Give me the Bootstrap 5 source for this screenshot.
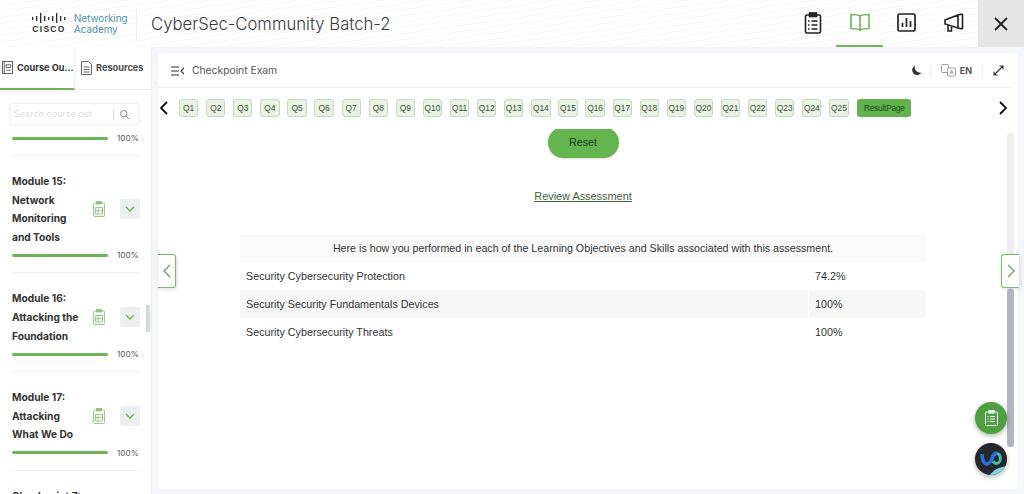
<!DOCTYPE html>
<html lang="en">
<head>
  <meta charset="UTF-8" />
  <meta name="viewport" content="width=device-width, initial-scale=1.0"/>
  <title>CyberSec-Community Batch-2</title>
  <link href="https://cdn.jsdelivr.net/npm/bootstrap@5.3.0/dist/css/bootstrap.min.css" rel="stylesheet"/>
  <style>
    html, body { height: 494px; overflow: hidden; }
    body { background: #f5f6fa; font-family: Inter, "Liberation Sans", sans-serif; color: #2b2b2b; position: relative; }
    .top-bar { height: 47px; background: repeating-linear-gradient(172deg, #fff 0 5px, #f8f8f8 5px 6px); }
    .brand-box { width: 137px; padding-left: 32px; border-right: 1px solid #f0f0f0; height: 32px; }
    .cisco-word { font: 700 8.5px/9px "Liberation Sans", sans-serif; letter-spacing: 1.3px; color: #2c2c2c; margin-top: 2px; text-align: center; }
    .academy-word { font: 400 9.8px/11px Inter, sans-serif; color: #4f8fb0; margin-left: 8px; }
    .course-title { font: 300 16.7px/24px Inter, sans-serif; color: #3a3a3a; margin-left: 14px; }
    .top-icons { margin-right: 1px; }
    .top-icon { width: 47px; height: 47px; border-bottom: 2px solid transparent; }
    .top-icon.on { border-bottom-color: #6cb75a; }
    .close-box { width: 46px; height: 47px; background: #e6e6e6; }
    .side-panel { width: 152px; height: 447px; background: #fff; border-right: 1px solid #eceef2; position: relative; }
    .side-tab { height: 43px; font-size: 9.2px; font-weight: 700; color: #4a4a4a; white-space: nowrap; border-bottom: 1px solid #eee; }
    .side-tab.on { width: 75px; padding-left: 2px; border-bottom: 2px solid #6cb75a; border-right: 1px solid #f0f0f0; color: #333; }
    .side-tab.off { width: 76px; padding-left: 6px; }
    .search-wrap { margin: 13px 11px 3px 9px; height: 22px; border: 1px solid #eee; border-radius: 3px; font-size: 9px; color: #dedede; padding-left: 4px; }
    .search-cut { border-left: 1px solid #ddd; height: 11px; margin-left: auto; padding-left: 6px; margin-right: 10px; }
    .module-list { height: 366px; overflow: hidden; padding: 0 11px 0 12px; }
    .module-item { border-bottom: 1px solid #f0f0f0; padding: 16px 0 11px; }
    .module-item.first { padding: 1px 0 11px; }
    .module-name { font-size: 10.2px; font-weight: 700; line-height: 18.6px; color: #333; width: 81px; }
    .side-chevron { width: 20px; height: 20px; background: #eceef0; border-radius: 2px; margin-left: 15px; }
    .bar-row { margin-top: 3px; }
    .bar-track { width: 96px; height: 3px; background: #6db35a; border-radius: 2px; }
    .bar-label { font-size: 8.2px; color: #555; margin-left: 9px; line-height: 12px; }
    .side-scroll { position: absolute; right: 1px; top: 258px; width: 4px; height: 27px; background: #d6d8dc; }
    .main-card { width: 860px; height: 436px; margin: 6px 0 0 6px; background: #fff; border-radius: 4px; position: relative; box-shadow: 0 0 2px rgba(0,0,0,.06); }
    .exam-head { height: 35px; padding: 1px 9px 0 13px; border-bottom: 1px solid #f0f0f0; margin-right: 5px; font-size: 10.3px; color: #555; }
    .lang-label { font-size: 9px; font-weight: 700; color: #555; }
    .head-sep { border-left: 1px solid #eee; height: 12px; margin: 0 10px; }
    .head-sep.tight { margin-left: 8px; }
    .q-row { height: 41px; padding: 11px 0 0 2px; }
    .q-pill { width: 19.3px; height: 18px; margin-right: 7.8px; background: #e9f3e4; border: 1px solid #c6d8bf; border-radius: 3px; font: 8.4px/16px "Liberation Sans", sans-serif; color: #3d4a3a; text-align: center; flex: none; }
    .q-result { width: 54px; height: 18px; margin-left: 1px; background: #62b14c; border-radius: 3px; font: 8.3px/18px "Liberation Sans", sans-serif; color: #1c4f16; text-align: center; letter-spacing: -.2px; flex: none; }
    .q-arrow-left { margin: 2px 11px 0 0; flex: none; }
    .q-arrow-right { margin: 2px 0 0 88px; flex: none; }
    .content-area { height: 359px; overflow: hidden; font-family: "Liberation Sans", sans-serif; text-align: center; padding-right: 10px; }
    .reset-pill { width: 71px; height: 31px; margin-top: -2px; background: #64b450; border-radius: 16px; font-size: 10.7px; line-height: 31px; color: #1e3a18; box-shadow: 0 1px 2px rgba(0,0,0,.15); }
    .review-link { margin-top: 31px; font-size: 10.9px; line-height: 14px; color: #3e5f3c; text-decoration: underline; }
    .score-table { width: 686px; margin: 32px 0 0 82px; font-size: 10.75px; color: #333; text-align: left; }
    .score-head { height: 27px; line-height: 27px; background: #fafafa; text-align: center; font-size: 10.7px; }
    .score-row { height: 28px; line-height: 28px; padding-left: 6px; }
    .score-row.alt { background: #f6f6f6; }
    .score-value { margin-left: auto; width: 118px; padding-left: 6px; border-left: 1px solid #fff; }
    .edge-tab { position: absolute; top: 201px; width: 18px; height: 34px; background: #fff; border: 1px solid #7fbb6b; box-shadow: 1px 1px 4px rgba(0,0,0,.15); }
    .edge-left { left: 0; border-left: 0; border-radius: 0 3px 3px 0; }
    .edge-right { right: -1px; border-right: 0; border-radius: 3px 0 0 3px; }
    .page-scroll { position: absolute; right: 4px; top: 80px; width: 7px; height: 314px; background: #eeeef0; border-radius: 4px; }
    .page-thumb { position: absolute; left: 0; bottom: 0; width: 100%; height: 158px; background: #b4b4bc; border-radius: 4px; }
    .float-btn { position: absolute; left: 817px; width: 32px; height: 32px; border-radius: 50%; box-shadow: 0 2px 5px rgba(0,0,0,.3); }
    .float-green { top: 349px; background: #4d9f3f; }
    .float-webex { top: 390px; background: #24272b; overflow: hidden; }
    .tr-glyph { font: 700 5.5px "Liberation Sans", sans-serif; fill: #888; stroke: none; }
  </style>
</head>
<body>
  <!-- Top bar -->
  <div class="top-bar d-flex align-items-center">
    <div class="brand-box d-flex align-items-center">
      <div>
        <svg class="d-block" width="34" height="10" viewBox="0 0 34 10" fill="#2c2c2c">
          <rect x="0" y="4" width="1.3" height="3"/><rect x="4" y="3" width="1.3" height="5"/><rect x="8" y="0" width="1.3" height="10"/>
          <rect x="12" y="3" width="1.3" height="5"/><rect x="16" y="4" width="1.3" height="3"/><rect x="20" y="3" width="1.3" height="5"/>
          <rect x="24" y="0" width="1.3" height="10"/><rect x="28" y="3" width="1.3" height="5"/><rect x="32" y="4" width="1.3" height="3"/>
        </svg>
        <div class="cisco-word">CISCO</div>
      </div>
      <div class="academy-word">Networking<br/>Academy</div>
    </div>
    <div class="course-title">CyberSec-Community Batch-2</div>
    <div class="ms-auto d-flex">
      <div class="top-icons d-flex">
        <div class="top-icon d-flex align-items-center justify-content-center">
          <svg width="18" height="22" viewBox="0 0 18 22" fill="none" stroke="#222" stroke-width="1.6"><rect x="1.500" y="3" width="15" height="18" rx="1.500"/><rect x="5.500" y="1" width="7" height="3.500" fill="#222"/><path d="M7.500 9h6M7.500 13h6M7.500 17h6M4 9h1.500M4 13h1.500M4 17h1.500"/></svg>
        </div>
        <div class="top-icon on d-flex align-items-center justify-content-center">
          <svg width="20" height="19" viewBox="0 0 20 19" fill="none" stroke="#6cb75a" stroke-width="1.600"><path d="M10 3C8 1.800 5 1.500 1 1.500v14c4 0 7 .3 9 1.500 2-1.200 5-1.500 9-1.500v-14c-4 0-7 .3-9 1.500zM10 3v15"/></svg>
        </div>
        <div class="top-icon d-flex align-items-center justify-content-center">
          <svg width="19" height="19" viewBox="0 0 19 19" fill="none" stroke="#222" stroke-width="1.700"><rect x="1" y="1" width="17" height="17" rx="1.500"/><path d="M5.500 14V10M9.500 14V5M13.500 14V8"/></svg>
        </div>
        <div class="top-icon d-flex align-items-center justify-content-center">
          <svg width="20" height="20" viewBox="0 0 20 20" fill="none" stroke="#222" stroke-width="1.600"><path d="M1 7l13-5v13L1 11zM18.500 1v15M14 2l4.500-1M14 15l4.500 1M4 12v6h3.500v-5"/></svg>
        </div>
      </div>
      <div class="close-box d-flex align-items-center justify-content-center">
        <svg width="14" height="14" viewBox="0 0 14 14" stroke="#222" stroke-width="1.800"><path d="M1 1l12 12M13 1L1 13"/></svg>
      </div>
    </div>
  </div>

  <div class="d-flex">
    <!-- Sidebar -->
    <div class="side-panel flex-shrink-0">
      <div class="d-flex">
        <div class="side-tab on d-flex align-items-center gap-1">
          <svg class="flex-shrink-0" width="11" height="13" viewBox="0 0 12 14" fill="none" stroke="#555"><rect x=".5" y=".5" width="11" height="13"/><path d="M2.500.5v13M4.500 4h5v3h-5zM4.500 10h5"/></svg>
          Course Ou...
        </div>
        <div class="side-tab off d-flex align-items-center gap-1">
          <svg class="flex-shrink-0" width="11" height="14" viewBox="0 0 11 14" fill="none" stroke="#666"><path d="M.5.500h7l3 3v10H.5zM2.500 6h6M2.500 8.500h6M2.500 11h6"/></svg>
          Resources
        </div>
      </div>
      <div class="search-wrap d-flex align-items-center">
        Search course out
        <div class="search-cut d-flex align-items-center">
          <svg width="9" height="9" viewBox="0 0 9 9" fill="none" stroke="#888"><circle cx="3.700" cy="3.700" r="3.200"/><path d="M6 6l3 3"/></svg>
        </div>
      </div>
      <div class="module-list" id="moduleList"></div>
      <div class="side-scroll"></div>
    </div>

    <!-- Main card -->
    <div class="main-card">
      <div class="exam-head d-flex align-items-center">
        <svg class="me-2" width="13" height="10" viewBox="0 0 13 10" fill="none" stroke="#333" stroke-width="1.200"><path d="M0 1h8M0 5h8M0 9h8M13 2L10 5l3 3"/></svg>
        Checkpoint Exam
        <svg class="ms-auto" width="11" height="11" viewBox="0 0 11 11" fill="#333"><path d="M4 .5a5 5 0 1 0 6.500 7A5.500 5.500 0 0 1 4 .5z"/></svg>
        <div class="head-sep tight"></div>
        <svg width="15" height="13" viewBox="0 0 15 13" fill="none" stroke="#888" stroke-width=".8"><rect x=".5" y=".5" width="7" height="8" rx="1"/><rect x="6.500" y="4" width="8" height="8" rx="1" fill="#fff"/><text class="tr-glyph" x="8.500" y="10.200">A</text></svg>
        <span class="lang-label ms-1">EN</span>
        <div class="head-sep"></div>
        <svg width="11" height="11" viewBox="0 0 11 11" fill="none" stroke="#333" stroke-width="1.100"><path d="M1 10L10 1M6.500 1H10v3.500M1 6.500V10h3.500"/></svg>
      </div>
      <div class="q-row d-flex align-items-start" id="questionRow"></div>
      <div class="content-area">
        <div class="reset-pill mx-auto">Reset</div>
        <div class="review-link">Review Assessment</div>
        <div class="score-table">
          <div class="score-head">Here is how you performed in each of the Learning Objectives and Skills associated with this assessment.</div>
          <div class="score-row d-flex">Security Cybersecurity Protection<span class="score-value">74.2%</span></div>
          <div class="score-row alt d-flex">Security Security Fundamentals Devices<span class="score-value">100%</span></div>
          <div class="score-row d-flex">Security Cybersecurity Threats<span class="score-value">100%</span></div>
        </div>
      </div>

      <div class="page-scroll"><div class="page-thumb"></div></div>
      <div class="edge-tab edge-left d-flex align-items-center justify-content-center">
        <svg width="8" height="14" viewBox="0 0 8 14" fill="none" stroke="#6f9a68" stroke-width="1.300"><path d="M7 1L1 7l6 6"/></svg>
      </div>
      <div class="edge-tab edge-right d-flex align-items-center justify-content-center">
        <svg width="8" height="14" viewBox="0 0 8 14" fill="none" stroke="#6f9a68" stroke-width="1.300"><path d="M1 1l6 6-6 6"/></svg>
      </div>
      <div class="float-btn float-green d-flex align-items-center justify-content-center">
        <svg width="13" height="16" viewBox="0 0 13 16" fill="none" stroke="#fff" stroke-width="1"><rect x=".5" y="2" width="12" height="13.500" rx="1"/><rect x="4" y=".5" width="5" height="2.500" fill="#fff"/><path d="M5 6.500h5M5 9h5M5 11.500h5M2.500 6.500h1M2.500 9h1M2.500 11.500h1"/></svg>
      </div>
      <div class="float-btn float-webex">
        <svg class="d-block" width="32" height="32" viewBox="0 0 32 32" fill="none"><path d="M15 32c3-5 9-8 17-9v9z" fill="#7fd3e6"/><path d="M19 12c2-2 5-2 6 1s0 6-2 7-4 0-5-2" stroke="#3dbf9f" stroke-width="3"/><path d="M7 11c0 6 2 10 5 10s5-5 6-8c1-2 2-3 4-3" stroke="#2a6fe0" stroke-width="3.500"/></svg>
      </div>
    </div>
  </div>

  <script>
    const $ = id => document.getElementById(id);
    const clipIcon = `<svg class="flex-shrink-0" width="12" height="16" viewBox="0 0 12 16" fill="none" stroke="#8cc47d" stroke-width=".9"><rect x=".5" y="2" width="11" height="13.500" rx="1"/><rect x="3.500" y=".5" width="5" height="2.500" fill="#8cc47d"/><path d="M2.500 6.500h7v6.500h-7zM2.500 9.700h7M5 6.500V13"/></svg>`;
    const modules = [
      ['Module 15:', 'Network', 'Monitoring', 'and Tools'],
      ['Module 16:', 'Attacking the', 'Foundation'],
      ['Module 17:', 'Attacking', 'What We Do'],
      ['Checkpoint 7:']
    ];
    const progress = `<div class="bar-row d-flex align-items-center"><div class="bar-track"></div><div class="bar-label">100%</div></div>`;

    $('moduleList').innerHTML = `<div class="module-item first">${progress}</div>` + modules.map(lines => `
      <div class="module-item">
        <div class="d-flex align-items-center">
          <div class="module-name">${lines.map(l => `<div class="text-nowrap">${l}</div>`).join('')}</div>
          ${lines.length > 1 ? `${clipIcon}
          <div class="side-chevron d-flex align-items-center justify-content-center">
            <svg width="10" height="6" viewBox="0 0 10 6" fill="none" stroke="#6cb75a" stroke-width="1.400"><path d="M1 1l4 4 4-4"/></svg>
          </div>` : ''}
        </div>
        ${progress}
      </div>`).join('');

    let pills = `<svg class="q-arrow-left" width="8" height="14" viewBox="0 0 8 14" fill="none" stroke="#111" stroke-width="1.800"><path d="M7 1L1 7l6 6"/></svg>`;
    for (let i = 1; i <= 25; i++) pills += `<div class="q-pill">Q${i}</div>`;
    pills += `<div class="q-result">ResultPage</div>`;
    pills += `<svg class="q-arrow-right" width="8" height="14" viewBox="0 0 8 14" fill="none" stroke="#111" stroke-width="1.800"><path d="M1 1l6 6-6 6"/></svg>`;
    $('questionRow').innerHTML = pills;
  </script>
</body>
</html>
